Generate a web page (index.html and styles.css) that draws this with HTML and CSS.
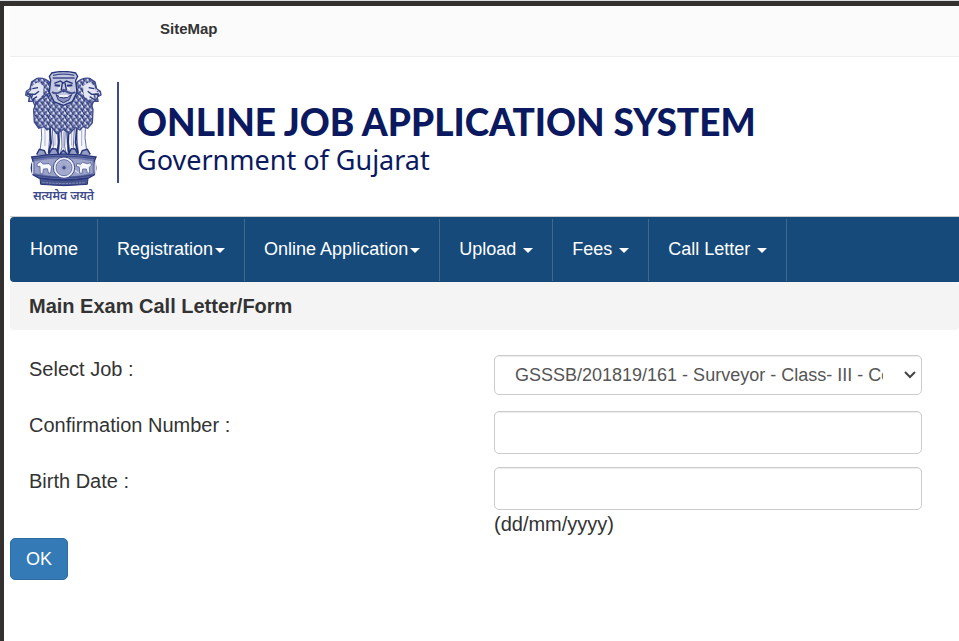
FILE: index.html
```html
<!DOCTYPE html>
<html lang="en">
<head>
  <meta charset="UTF-8" />
  <meta name="viewport" content="width=device-width, initial-scale=1" />
  <title>Online Job Application System</title>
  <link rel="stylesheet" href="styles.css">
</head>
<body>
<div class="page">

  <!-- Top bar -->
  <div class="top-bar">
    <a href="#" class="sitemap-link">SiteMap</a>
  </div>

  <!-- Logo -->
  <header class="header">
    <div class="emblem">
      <svg class="emblem-icon" viewBox="30 28 231 348" aria-hidden="true">
        <defs>
          <pattern id="mane" width="17" height="20" patternUnits="userSpaceOnUse">
            <rect width="17" height="20" fill="#8890bc" />
            <path d="M0 2q8 1 9 12M9 0q7 3 8 12M0 13q5 1 5 7" fill="none" stroke="#263479" stroke-width="4" />
            <path d="M4 1l5 7M12 11l4 6" stroke="#fff" stroke-width="4" />
          </pattern>
        </defs>

        <!-- side lions -->
        <path d="M66 50q24-3 40 14l14 46-30 28-30-6-6-13-13 0 2-13-11-6 2-11 11-8 5-20z" fill="url(#mane)" stroke="#3d4a8c" stroke-width="4" />
        <path d="M224 50q-24-3-40 14l-14 46 30 28 30-6 6-13 13 0-2-13 11-6-2-11-11-8-5-20z" fill="url(#mane)" stroke="#3d4a8c" stroke-width="4" />
        <path d="M52 72l16-10 18 11-2 26-14 15-18-3 3-14-15-2 9-10z" fill="#e4e6f2" />
        <path d="M238 72l-16-10-18 11 2 26 14 15 18-3-3-14 15-2-9-10z" fill="#e4e6f2" />
        <path d="M52 81l17-3M38 97l22 1 12-9M50 115l16-10M238 81l-17-3M252 97l-22 1-12-9M240 115l-16-10" fill="none" stroke="#263479" stroke-width="4" />

        <!-- legs -->
        <g fill="#f5f6fb" stroke="#6671a8" stroke-width="3">
          <path d="M78 180l2 48-5 39-9 12h34l7-92z" />
          <path d="M212 180l-2 48 5 39 9 12h-34l-7-92z" />
          <path d="M111 185l4 70-10 24h26l5-80z" />
          <path d="M179 185l-4 70 10 24h-26l-5-80z" />
          <path d="M139 195l2 60-5 21h18l-5-21 2-60z" />
        </g>
        <path d="M104 190l4 54-7 30M129 197l2 45-4 35M161 197l-2 45 4 35M186 190l-4 54 7 30" fill="none" stroke="#263479" stroke-width="6" />
        <path d="M90 198v55M120 202v50M145 210v50M170 202v50M200 198v55" stroke="#abb1d0" stroke-width="3" />

        <!-- mane -->
        <path d="M78 112l34-25 66 0 34 25 16 12 6 20-2 39-14 17-14-5-9 10-14-8-17 19-19-13-20 13-15-20-14 9-9-10-16 5-13-19-2-37 7-20z" fill="url(#mane)" stroke="#3d4a8c" stroke-width="4" />

        <!-- centre lion -->
        <path d="M110 34q35-9 72 0l6 10-6 12 4 36-14 28-27 11-27-10-15-29 4-36-4-12z" fill="#c3c8df" stroke="#263479" stroke-width="4" />
        <path d="M114 41q32-7 64 0M113 49l66 0" fill="none" stroke="#3d4a8c" stroke-width="4" />
        <path d="M118 65l18-7 9 6 9-6 19 7M142 64l-3 20 7 6 8-6-4-20" fill="none" stroke="#263479" stroke-width="4" />
        <path d="M119 71l16 1M156 72l16-1" stroke="#263479" stroke-width="6" />
        <path d="M111 91q11 8 25 0l10-6 11 6q15 7 24 0" fill="none" stroke="#46528f" stroke-width="6" />
        <path d="M123 99q23 20 47 0l-8 16-17 8-15-8z" fill="#8890bb" stroke="#263479" stroke-width="3" />
        <path d="M132 103l28 0M136 77l-7 7M157 77l7 7" stroke="#fff" stroke-width="4" />

        <!-- paws -->
        <path d="M65 278l8-15 15 4 6 13M101 278l10-17 12 1 8 16M135 277l10-11 11 11M161 278l8-17 11 1 9 16M196 280l6-13 15-4 9 15" fill="#969dc4" stroke="#263479" stroke-width="4" />

        <!-- abacus -->
        <path d="M50 286q95-17 193 0l-5 12q9 20 0 41l-18 10q-73 12-148 0l-18-10q-10-21 0-41z" fill="#6b76aa" stroke="#263479" stroke-width="4" />
        <path d="M59 299q88-18 174 0v36q-87 18-174 0z" fill="#9ba3c9" />
        <path d="M54 291q92-15 185 0M59 340q86 18 174 0" fill="none" stroke="#3d4a8c" stroke-width="4" />
        <path d="M66 307l10-7 8 7 18-1 8 8-3 20-6 1-4-14-12 1-2 14-7 0-1-22-8 1z" fill="#f7f8fc" stroke="#3d4a8c" stroke-width="2" />
        <path d="M185 306l12 2 5-6 15 4 10-3 2 8-6 6 1 17-7 0-3-12-11 0-2 13-7-1-1-18-9-2z" fill="#f7f8fc" stroke="#3d4a8c" stroke-width="2" />
        <path d="M53 300v38M241 300v38M179 326l12 8M192 315l7-2" stroke="#d9dcec" stroke-width="4" />

        <!-- wheel -->
        <circle cx="147" cy="318" r="32" fill="#f1f2f9" stroke="#3d4a8c" stroke-width="3" />
        <circle cx="147" cy="318" r="24" fill="#abb2d2" stroke="#6671a8" stroke-width="3" />
        <path d="M147 297v42M126 318h42M132 303l30 30M132 333l30-30M139 298l16 40M155 298l-16 40M127 310l40 16M127 326l40-16" stroke="#7781b0" stroke-width="1" />
        <circle cx="147" cy="318" r="5" fill="#3d4a8c" />

        <!-- plinth -->
        <path d="M75 350q70 12 144 0l-2 18q-71 8-140 0z" fill="#48558f" stroke="#263479" stroke-width="3" />
        <path d="M82 362q66 7 130 0" fill="none" stroke="#8891bb" stroke-width="3" stroke-dasharray="7 3" />
      </svg>
      <div class="motto" lang="hi">सत्यमेव जयते</div>
    </div>
    <div class="brand">
      <h1 class="brand-title">ONLINE JOB APPLICATION SYSTEM</h1>
      <p class="brand-sub">Government of Gujarat</p>
    </div>
  </header>

  <!-- Menu -->
  <nav class="navbar">
    <a href="#" class="nav-link">Home</a>
    <a href="#" class="nav-link">Registration<span class="caret"></span></a>
    <a href="#" class="nav-link">Online Application<span class="caret"></span></a>
    <a href="#" class="nav-link">Upload <span class="caret"></span></a>
    <a href="#" class="nav-link">Fees <span class="caret"></span></a>
    <a href="#" class="nav-link">Call Letter <span class="caret"></span></a>
  </nav>

  <!-- Form -->
  <h2 class="form-title">Main Exam Call Letter/Form</h2>
  <form>
    <div class="form-row">
      <label for="job">Select Job :</label>
      <div>
        <select id="job" class="form-control">
          <option>GSSSB/201819/161 - Surveyor - Class- III - Commissioner</option>
        </select>
      </div>
    </div>
    <div class="form-row">
      <label for="confirmation">Confirmation Number :</label>
      <div>
        <input type="text" id="confirmation" class="form-control" />
      </div>
    </div>
    <div class="form-row">
      <label for="birthdate">Birth Date :</label>
      <div>
        <input type="text" id="birthdate" class="form-control" aria-describedby="date-hint" />
        <div id="date-hint">(dd/mm/yyyy)</div>
      </div>
    </div>
    <button type="submit" class="btn">OK</button>
  </form>

</div>
</body>
</html>
```
FILE: styles.css
```css
* {
  margin: 0;
  padding: 0;
  box-sizing: border-box;
}
body {
  font-family: "Liberation Sans", Arial, sans-serif;
  font-size: 20px;
  line-height: 28px;
  color: #333;
  background: #fff;
  border-top: 1px solid #dcdfe2;
}
.page {
  min-height: calc(100vh - 1px);
  padding-left: 6px;
  border-top: 5px solid #333130;
  border-left: 4px solid #333130;
}

/* top bar */
.top-bar {
  height: 51px;
  padding: 7px 150px;
  background: #fbfbfb;
  border-bottom: 1px solid #eee;
}
.sitemap-link {
  font-size: 15px;
  font-weight: bold;
  color: #333;
  text-decoration: none;
}

/* logo */
.header {
  display: flex;
  align-items: flex-start;
  gap: 15px;
  padding: 14px 15px 12px;
  border-bottom: 1px solid #ccc;
}
.emblem {
  width: 77px;
  text-align: center;
}
.emblem-icon {
  display: block;
  width: 77px;
  height: 116px;
}
.motto {
  padding-top: 1px;
  font-family: "Noto Sans", "Noto Sans Devanagari", sans-serif;
  font-size: 12px;
  line-height: 16px;
  font-weight: 600;
  white-space: nowrap;
  color: #3d4a8c;
}
.brand {
  height: 101px;
  margin-top: 11px;
  padding: 20px 0 0 18px;
  border-left: 2px solid #3d4a8c;
  color: #0b1a60;
}
.brand-title {
  font-family: Lato, "Open Sans", sans-serif;
  font-size: 37px;
  line-height: 40px;
  font-weight: 900;
  white-space: nowrap;
}
.brand-sub {
  font-family: "Noto Sans", "Open Sans", sans-serif;
  font-size: 27px;
  line-height: 36px;
}

/* menu */
.navbar {
  display: flex;
  padding: 2px 1px 1px;
  background: #164a7b;
  border-radius: 4px 0 0 4px;
}
.nav-link {
  padding: 16px 19px 18px;
  border-right: 1px solid #41698f;
  font-size: 18px;
  color: #fff;
  text-decoration: none;
  white-space: nowrap;
}
.caret {
  display: inline-block;
  margin-left: 2px;
  vertical-align: middle;
  border-top: 5px solid #fff;
  border-left: 5px solid transparent;
  border-right: 5px solid transparent;
}

/* form */
.form-title {
  margin-bottom: 25px;
  padding: 10px 19px;
  background: #f4f4f4;
  border-radius: 4px;
  font-size: 20px;
}
.form-row {
  display: grid;
  grid-template-columns: 1fr 1fr;
  gap: 37px;
  min-height: 56px;
  padding: 0 37px 0 19px;
}
.form-control {
  display: block;
  width: 100%;
  height: 43px;
  padding: 8px 20px;
  font-family: inherit;
  font-size: 18px;
  color: #555;
  background: #fff;
  border: 1px solid #ccc;
  border-radius: 5px;
  box-shadow: inset 0 1px 1px rgba(0, 0, 0, 0.08);
}
select.form-control {
  height: 40px;
  padding-right: 38px;
  appearance: none;
  background: #fff url("data:image/svg+xml,%3Csvg xmlns='http://www.w3.org/2000/svg' width='12' height='8'%3E%3Cpath d='M1 1l5 5 5-5' fill='none' stroke='%23444' stroke-width='2'/%3E%3C/svg%3E") no-repeat right 5px center;
}
.btn {
  padding: 6px 15px;
  font-family: inherit;
  font-size: 18px;
  line-height: 28px;
  color: #fff;
  background: #337ab7;
  border: 1px solid #2e6da4;
  border-radius: 5px;
  cursor: pointer;
}
```
